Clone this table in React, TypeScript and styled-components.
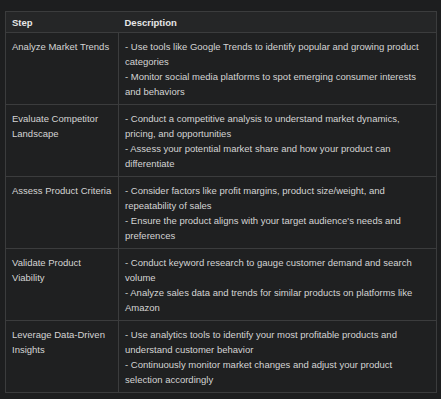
import styled, { createGlobalStyle } from "styled-components";

const Global = createGlobalStyle`
  html, body {
    margin: 0;
    background: #1d1e1f;
  }
`;

const Page = styled.div`
  padding: 11px 4px 0 5px;
  font-family: "Liberation Sans", Arial, sans-serif;
`;

const Table = styled.table`
  width: 432px;
  table-layout: fixed;
  border-collapse: collapse;
  font-size: 9.5px;
  line-height: 15px;
  color: #d4d4d4;
  background: #1f2021;
  border: 1px solid #3b3c3d;
`;

const Col = styled.col<{ $w?: number }>`
  width: ${(p) => (p.$w ? `${p.$w}px` : "auto")};
`;

const HeadCell = styled.th`
  text-align: left;
  font-weight: 700;
  color: #e6e6e6;
  background: #252627;
  padding: 3px 6px 2px;
  border-bottom: 1px solid #3b3c3d;
`;

const Cell = styled.td<{ $first?: boolean }>`
  vertical-align: top;
  padding: 6px ${(p) => (p.$first ? "2px" : "6px")} 5px 6px;
  height: 60px;
  border-top: 1px solid #3b3c3d;
  border-right: ${(p) => (p.$first ? "1px solid #3b3c3d" : "none")};
`;

const rows = [
  {
    step: "Analyze Market Trends",
    lines: [
      "- Use tools like Google Trends to identify popular and growing product categories",
      "- Monitor social media platforms to spot emerging consumer interests and behaviors",
    ],
  },
  {
    step: "Evaluate Competitor Landscape",
    lines: [
      "- Conduct a competitive analysis to understand market dynamics, pricing, and opportunities",
      "- Assess your potential market share and how your product can differentiate",
    ],
  },
  {
    step: "Assess Product Criteria",
    lines: [
      "- Consider factors like profit margins, product size/weight, and repeatability of sales",
      "- Ensure the product aligns with your target audience's needs and preferences",
    ],
  },
  {
    step: "Validate Product Viability",
    lines: [
      "- Conduct keyword research to gauge customer demand and search volume",
      "- Analyze sales data and trends for similar products on platforms like Amazon",
    ],
  },
  {
    step: "Leverage Data-Driven Insights",
    lines: [
      "- Use analytics tools to identify your most profitable products and understand customer behavior",
      "- Continuously monitor market changes and adjust your product selection accordingly",
    ],
  },
];

const Line = styled.div``;

export default function App() {
  return (
    <Page>
      <Global />
      <Table>
        <colgroup>
          <Col $w={113} />
          <Col />
        </colgroup>
        <thead>
          <tr>
            <HeadCell>Step</HeadCell>
            <HeadCell>Description</HeadCell>
          </tr>
        </thead>
        <tbody>
          {rows.map((r) => (
            <tr key={r.step}>
              <Cell $first>{r.step}</Cell>
              <Cell>
                {r.lines.map((l) => (
                  <Line key={l}>{l}</Line>
                ))}
              </Cell>
            </tr>
          ))}
        </tbody>
      </Table>
    </Page>
  );
}
